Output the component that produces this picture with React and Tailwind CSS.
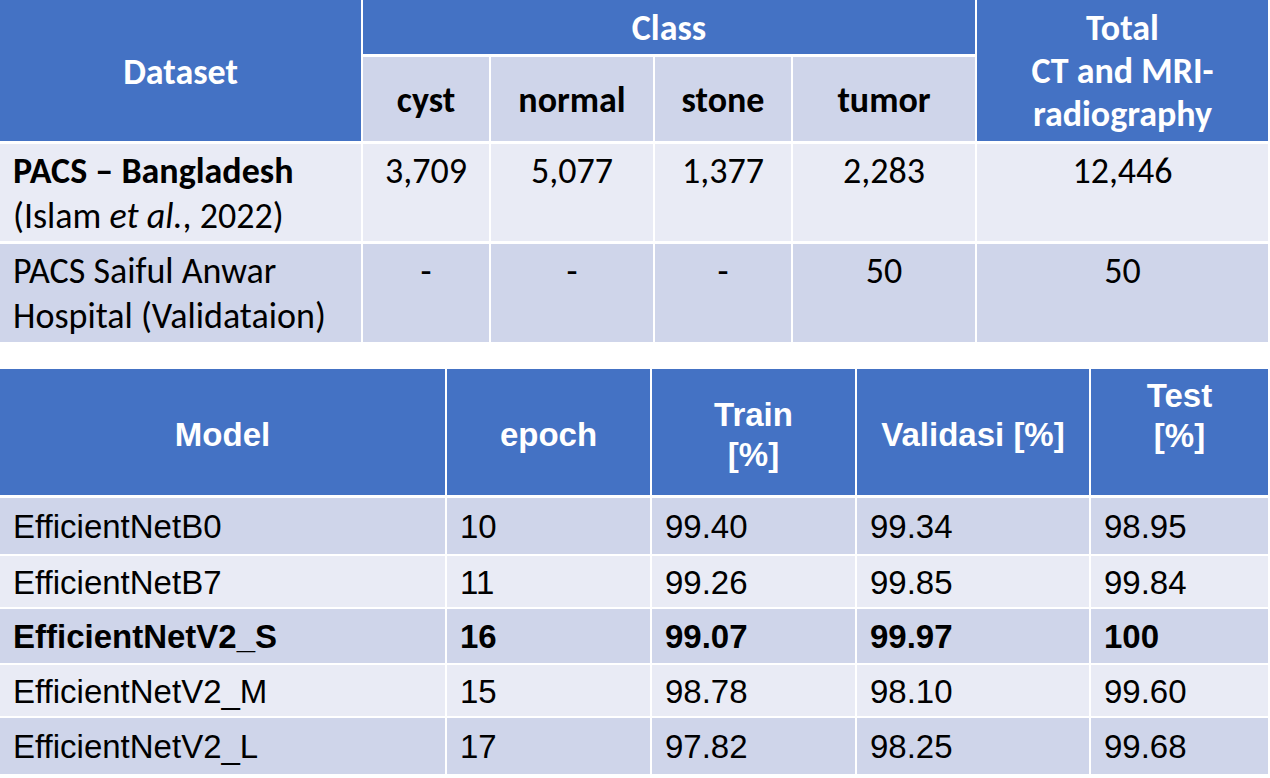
const classes = ['cyst', 'normal', 'stone', 'tumor']

const models = [
  { name: 'EfficientNetB0', epoch: '10', train: '99.40', val: '99.34', test: '98.95' },
  { name: 'EfficientNetB7', epoch: '11', train: '99.26', val: '99.85', test: '99.84' },
  { name: 'EfficientNetV2_S', epoch: '16', train: '99.07', val: '99.97', test: '100', bold: true },
  { name: 'EfficientNetV2_M', epoch: '15', train: '98.78', val: '98.10', test: '99.60' },
  { name: 'EfficientNetV2_L', epoch: '17', train: '97.82', val: '98.25', test: '99.68' },
]

function DatasetTable() {
  return (
    <div className="grid w-[1268px] grid-cols-[361px_126px_162px_136px_182px_291px] grid-rows-[54px_84px_97px_98px] gap-x-[2px] gap-y-[3px] bg-white font-['Carlito','Lato',sans-serif] text-[36px] text-black">
      {/* header */}
      <div className="row-span-2 flex items-center justify-center bg-[#4472C4] pt-[3px] font-bold text-white">
        Dataset
      </div>
      <div className="col-span-4 flex items-center justify-center bg-[#4472C4] pt-[2px] font-bold text-white">
        Class
      </div>
      <div className="row-span-2 flex flex-col items-center justify-center bg-[#4472C4] pt-[2px] text-center font-bold leading-[43px] text-white">
        <span>Total</span>
        <span>CT and MRI-</span>
        <span>radiography</span>
      </div>
      {classes.map(c => (
        <div key={c} className="flex items-center justify-center bg-[#CFD5EA] pt-[2px] font-bold">
          {c}
        </div>
      ))}

      {/* PACS Bangladesh */}
      <div className="bg-[#E9EBF5] pl-[13px] pt-[5px] leading-[45px]">
        <div className="font-bold">PACS – Bangladesh</div>
        <div>(Islam <i>et al.</i>, 2022)</div>
      </div>
      {['3,709', '5,077', '1,377', '2,283', '12,446'].map((v, i) => (
        <div key={i} className="bg-[#E9EBF5] pt-[5px] text-center leading-[45px]">{v}</div>
      ))}

      {/* PACS Saiful Anwar */}
      <div className="bg-[#CFD5EA] pl-[13px] pt-[5px] leading-[45px]">
        <div>PACS Saiful Anwar</div>
        <div>Hospital (Validataion)</div>
      </div>
      {['-', '-', '-', '50', '50'].map((v, i) => (
        <div key={i} className="bg-[#CFD5EA] pt-[5px] text-center leading-[45px]">{v}</div>
      ))}
    </div>
  )
}

function ModelTable() {
  return (
    <div className="mt-[27px] grid w-[1268px] grid-cols-[445px_203px_203px_232px_177px] grid-rows-[127px_56px_51px_54px_51px_56px] gap-x-[2px] gap-y-[2px] bg-white font-['Liberation_Sans',Arial,sans-serif] text-[33px] text-black">
      <div className="mb-[1px] flex items-center justify-center bg-[#4472C4] pt-[5px] font-bold text-white">Model</div>
      <div className="mb-[1px] flex items-center justify-center bg-[#4472C4] pt-[5px] font-bold text-white">epoch</div>
      <div className="mb-[1px] flex flex-col items-center justify-center bg-[#4472C4] pt-[5px] font-bold leading-[40px] text-white">
        <span>Train</span>
        <span>[%]</span>
      </div>
      <div className="mb-[1px] flex items-center justify-center bg-[#4472C4] pt-[5px] font-bold text-white">Validasi [%]</div>
      <div className="mb-[1px] flex flex-col items-center justify-center bg-[#4472C4] pb-[32px] font-bold leading-[40px] text-white">
        <span>Test</span>
        <span>[%]</span>
      </div>

      {models.map((m, i) => {
        const bg = i % 2 === 0 ? 'bg-[#CFD5EA]' : 'bg-[#E9EBF5]'
        const weight = m.bold ? 'font-bold' : ''
        return [m.name, m.epoch, m.train, m.val, m.test].map((v, j) => (
          <div key={i + '-' + j} className={`flex items-center pl-[13px] pt-[2px] ${bg} ${weight}`}>
            {v}
          </div>
        ))
      })}
    </div>
  )
}

export default function App() {
  return (
    <div className="min-h-screen w-[1270px] bg-white">
      <DatasetTable />
      <ModelTable />
    </div>
  )
}
